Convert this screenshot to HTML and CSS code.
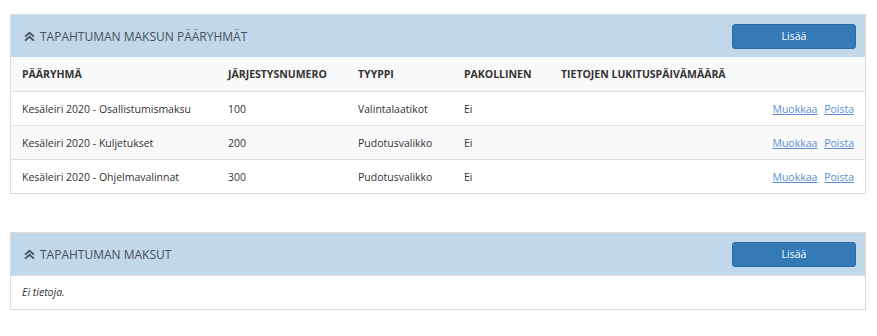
FILE: index.html
```html
<!DOCTYPE html>
<html lang="fi">
  <head>
    <meta charset="UTF-8" />
    <title>Tapahtuman maksut</title>
    <link rel="stylesheet" href="styles.css">
  </head>
  <body>
    <div class="panel">
      <div class="panel-heading">
        <span class="panel-title">
          <svg class="chev" width="11" height="11" viewBox="0 0 11 11"><path d="M1 5.6 5.5 1.8 10 5.6M1 9.6 5.5 5.8 10 9.6" fill="none" stroke="#46535f" stroke-width="1.8"/></svg>
          TAPAHTUMAN MAKSUN PÄÄRYHMÄT
        </span>
        <button class="btn">Lisää</button>
      </div>
      <table>
        <thead>
          <tr>
            <th class="c1">PÄÄRYHMÄ</th>
            <th class="c2">JÄRJESTYSNUMERO</th>
            <th class="c3">TYYPPI</th>
            <th class="c4">PAKOLLINEN</th>
            <th>TIETOJEN LUKITUSPÄIVÄMÄÄRÄ</th>
            <th></th>
          </tr>
        </thead>
        <tbody>
          <tr>
            <td>Kesäleiri 2020 - Osallistumismaksu</td>
            <td>100</td>
            <td>Valintalaatikot</td>
            <td>Ei</td>
            <td></td>
            <td class="actions"><a href="#">Muokkaa</a> <a href="#">Poista</a></td>
          </tr>
          <tr>
            <td>Kesäleiri 2020 - Kuljetukset</td>
            <td>200</td>
            <td>Pudotusvalikko</td>
            <td>Ei</td>
            <td></td>
            <td class="actions"><a href="#">Muokkaa</a> <a href="#">Poista</a></td>
          </tr>
          <tr>
            <td>Kesäleiri 2020 - Ohjelmavalinnat</td>
            <td>300</td>
            <td>Pudotusvalikko</td>
            <td>Ei</td>
            <td></td>
            <td class="actions"><a href="#">Muokkaa</a> <a href="#">Poista</a></td>
          </tr>
        </tbody>
      </table>
    </div>

    <div class="panel">
      <div class="panel-heading">
        <span class="panel-title">
          <svg class="chev" width="11" height="11" viewBox="0 0 11 11"><path d="M1 5.6 5.5 1.8 10 5.6M1 9.6 5.5 5.8 10 9.6" fill="none" stroke="#46535f" stroke-width="1.8"/></svg>
          TAPAHTUMAN MAKSUT
        </span>
        <button class="btn">Lisää</button>
      </div>
      <div class="empty">Ei tietoja.</div>
    </div>
  </body>
</html>
```

FILE: styles.css
```css
body {
  font-family: "Open Sans", sans-serif;
  font-size: 10.5px;
  color: #333;
  background-color: #fff;
  margin: 0;
  padding: 14px 11px 0 10px;
}
.panel {
  border: 1px solid #dcdcdc;
  margin-bottom: 38px;
}
.panel-heading {
  display: flex;
  align-items: center;
  justify-content: space-between;
  background-color: #c1d7ea;
  height: 42px;
  padding: 0 9px 0 13px;
}
.panel-title {
  display: flex;
  align-items: center;
  gap: 5px;
  font-size: 12px;
  color: #48525c;
}
.btn {
  font-family: "Open Sans", sans-serif;
  font-size: 10.5px;
  color: #fff;
  background-color: #337ab7;
  border: 1px solid #2e6da4;
  border-radius: 3px;
  width: 124px;
  height: 25px;
  padding: 0;
}
table {
  width: 100%;
  border-collapse: collapse;
}
th,
td {
  text-align: left;
  padding: 0 11px;
  height: 33px;
  border-top: 1px solid #dedede;
  white-space: nowrap;
}
thead th {
  height: 34px;
  border-top: none;
  font-weight: bold;
  color: #333;
  background-color: #f9f9f9;
}
tbody tr:nth-child(even) td {
  background-color: #f9f9f9;
}
.c1 {
  width: 184px;
}
.c2 {
  width: 108px;
}
.c3 {
  width: 84px;
}
.c4 {
  width: 75px;
}
.actions {
  text-align: right;
}
.actions a {
  color: #5b8fd0;
  margin-left: 4px;
}
.empty {
  padding: 0 11px;
  height: 33px;
  line-height: 33px;
  font-style: italic;
  border-top: 1px solid #dedede;
}
```
